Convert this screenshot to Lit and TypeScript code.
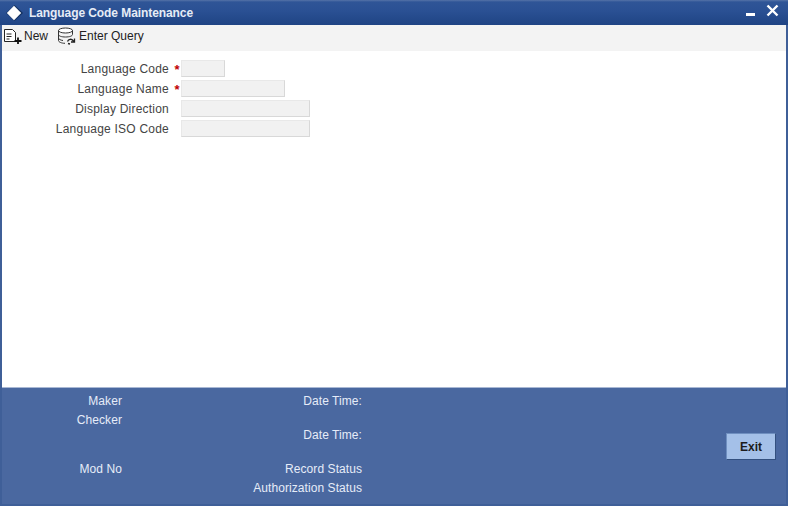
import { LitElement, html, css } from "lit";
import { customElement } from "lit/decorators.js";

@customElement("app-root")
export class AppRoot extends LitElement {
  static styles = css`
    :host {
      display: block;
      width: 788px;
      height: 506px;
      font: 12px "Liberation Sans", Arial, sans-serif;
      color: #333;
    }
    * { box-sizing: border-box; }
    .win {
      width: 788px;
      height: 506px;
      display: flex;
      flex-direction: column;
      background: #3f5f98;
      padding: 0 2px 2px;
    }
    .title {
      height: 25px;
      margin: 0 -2px;
      padding: 0 8px 0 6px;
      display: flex;
      align-items: center;
      background: linear-gradient(#5573a8 0, #2f5597 2px, #2a5093 45%, #1f4484 100%);
      color: #fff;
      font-weight: bold;
      flex: none;
    }
    .title .diamond { width: 17px; height: 16px; margin-right: 6px; flex: none; }
    .title .text { flex: 1; color: #e6ecf6; letter-spacing: -0.08px; }
    .title .controls { display: flex; align-items: flex-start; gap: 11px; height: 25px; padding-top: 4px; padding-right: 1px; }
    .min { width: 9px; height: 3px; background: #fff; margin-top: 9px; }
    .close { width: 13px; height: 13px; display: block; }
    .toolbar {
      height: 26px;
      flex: none;
      display: flex;
      align-items: center;
      gap: 8px;
      padding: 0 0 5px 1px;
      background: #f3f3f3;
      color: #222;
    }
    .tool { display: flex; align-items: center; gap: 1px; }
    .tool + .tool { gap: 2px; margin-left: 1px; }
    .tool svg { width: 20px; height: 18px; display: block; flex: none; }
    .body {
      flex: 1;
      background: #fff;
      padding: 9px 0 0 0;
      display: flex;
      flex-direction: column;
      gap: 2px;
      border-bottom: 1px solid #a9b8d4;
    }
    .row { display: flex; align-items: center; height: 18px; }
    .label { width: 167px; text-align: right; color: #444; letter-spacing: 0.22px; white-space: nowrap; }
    .req { width: 12px; text-align: center; color: #c00000; font-weight: bold; font-size: 13px; padding-left: 4px; }
    .field { height: 17px; align-self: flex-start; background: #f1f1f1; border: 1px solid #e8e8e8; border-right-color: #d8d8d8; border-bottom-color: #d8d8d8; }
    .w44 { width: 44px; }
    .w104 { width: 104px; }
    .w129 { width: 129px; }
    .footer {
      height: 116px;
      flex: none;
      background: #4a68a0;
      color: #e6ecf8;
      display: flex;
    }
    .col { display: flex; flex-direction: column; text-align: right; line-height: 14px; padding-top: 6px; letter-spacing: 0.07px; }
    .c1 { width: 120px; }
    .c2 { width: 240px; }
    .exit-wrap { flex: 1; display: flex; justify-content: flex-end; align-items: flex-start; padding: 45px 10px 0 0; }
    .exit {
      width: 50px;
      height: 27px;
      background: #a4c0e8;
      border: 1px solid;
      border-color: #6f8fc0 #33507f #33507f #6f8fc0;
      color: #1c1c1c;
      font: bold 12px "Liberation Sans", Arial, sans-serif;
      padding: 0;
    }
    .m5 { margin-top: 5px; }
    .m20 { margin-top: 20px; }
    .m35 { margin-top: 35px; }
  `;

  private row(label: string, req: boolean, w: string) {
    return html`<div class="row">
      <div class="label">${label}</div>
      <div class="req">${req ? "*" : ""}</div>
      <div class="field ${w}"></div>
    </div>`;
  }

  render() {
    return html`<div class="win">
      <div class="title">
        <svg class="diamond" viewBox="0 0 17 16"><path d="M8.500 0 17 8 8.500 16 0 8Z" fill="#12305f"/><path d="M8 .8 15.200 8 8 15.200 .8 8Z" fill="#fff"/></svg>
        <span class="text">Language Code Maintenance</span>
        <div class="controls">
          <div class="min"></div>
          <svg class="close" viewBox="0 0 13 13"><path d="M1.500 1.500 11.500 11.500M11.500 1.500 1.500 11.500" stroke="#fff" stroke-width="2.400" fill="none"/></svg>
        </div>
      </div>
      <div class="toolbar">
        <div class="tool">
          <svg viewBox="0 0 20 18"><path d="M1.500 2.500h8l3 3v9h-11z" fill="#fff" stroke="#222"/><path d="M3.500 7h5M3.500 9.500h5M3.500 12h3" stroke="#222" fill="none"/><path d="M15 10.500v6.500M11.500 14h7" stroke="#111" stroke-width="1.800" fill="none"/></svg>
          <span>New</span>
        </div>
        <div class="tool">
          <svg viewBox="0 0 20 18"><ellipse cx="8.500" cy="3.500" rx="7" ry="2.500" fill="#fff" stroke="#333"/><path d="M1.500 3.500v10c0 1.500 3 2.800 6.500 2.800M15.500 3.500v4M1.500 7.500c0 1.500 3 2.500 7 2.500s7-1 7-2.500M1.500 11c0 1.200 2 2.200 4.500 2.500" fill="none" stroke="#333"/><path d="M10.500 14.500c1-2.500 4-3 5.500-1l1 1.500M17.500 11.500v3.500h-3.500M11 16.500l2 .5" fill="none" stroke="#222" stroke-width="1.300"/></svg>
          <span>Enter Query</span>
        </div>
      </div>
      <div class="body">
        ${this.row("Language Code", true, "w44")}
        ${this.row("Language Name", true, "w104")}
        ${this.row("Display Direction", false, "w129")}
        ${this.row("Language ISO Code", false, "w129")}
      </div>
      <div class="footer">
        <div class="col c1">
          <span>Maker</span>
          <span class="m5">Checker</span>
          <span class="m35">Mod No</span>
        </div>
        <div class="col c2">
          <span>Date Time:</span>
          <span class="m20">Date Time:</span>
          <span class="m20">Record Status</span>
          <span class="m5">Authorization Status</span>
        </div>
        <div class="exit-wrap"><button class="exit">Exit</button></div>
      </div>
    </div>`;
  }
}
